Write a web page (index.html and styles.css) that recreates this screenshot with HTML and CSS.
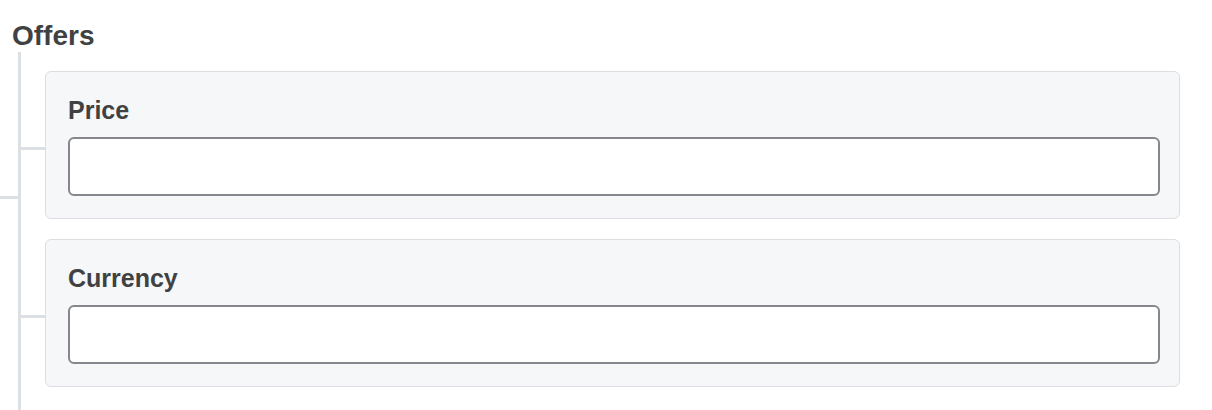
FILE: index.html
```html
<html><head>
	<title>Offers</title>
	<link rel="stylesheet" href="styles.css">
</head>
<body>
	<div id="offers" class="group">
		<h2>Offers</h2>
		<div class="children">
			<div class="field">
				<label for="price">Price</label>
				<input id="price" type="text">
			</div>
			<div class="field">
				<label for="currency">Currency</label>
				<input id="currency" type="text">
			</div>
		</div>
	</div>
</body></html>
```
FILE: styles.css
```css
		html {
			height: 100%;
			background: #ffffff;
			overflow: hidden;
		}
		body {
			margin: 0;
			padding: 19px 32px 0 0;
			font-family: "Liberation Sans", Arial, sans-serif;
			color: #404143;
		}
		.group h2 {
			font-size: 28px;
			line-height: 33px;
			font-weight: bold;
			margin: 0 0 0 12px;
		}
		.group .children {
			position: relative;
			margin-left: 18px;
			border-left: 3px solid #dcdfe3;
			padding: 19px 0 25px 24px;
		}
		/* branch coming from the parent tree */
		.group .children::before {
			content: "";
			position: absolute;
			left: -21px;
			top: 144px;
			width: 18px;
			height: 3px;
			background: #dcdfe3;
		}
		.field {
			position: relative;
			background: #f6f7f9;
			border: 1px solid #dcdee2;
			border-radius: 6px;
			padding: 23px 19px 22px 22px;
			margin-bottom: 20px;
		}
		.field:last-child {
			margin-bottom: 0;
		}
		.field::before {
			content: "";
			position: absolute;
			left: -25px;
			top: 75px;
			width: 24px;
			height: 3px;
			background: #dcdfe3;
		}
		.field label {
			display: block;
			font-size: 25px;
			line-height: 30px;
			font-weight: bold;
		}
		.field input {
			display: block;
			box-sizing: border-box;
			width: 100%;
			height: 59px;
			margin-top: 12px;
			border: 2px solid #85878c;
			border-radius: 6px;
			background: #ffffff;
			font-family: inherit;
			font-size: 22px;
			padding: 0 12px;
		}
```
